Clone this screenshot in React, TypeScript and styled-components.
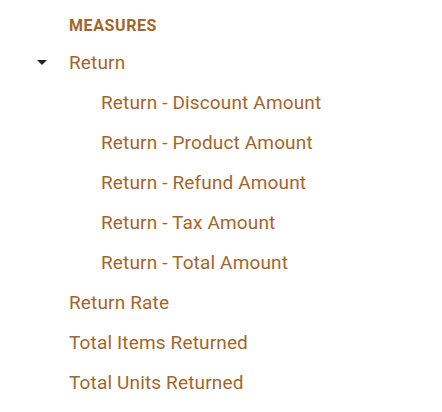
import styled, { createGlobalStyle } from 'styled-components';

const GlobalStyle = createGlobalStyle`
  body {
    margin: 0;
    background: #fff;
    font-family: Roboto, "Liberation Sans", sans-serif;
  }
`;

const Tree = styled.div`
  padding-top: 8px;
  color: #a4652b;
`;

const SectionTitle = styled.div`
  height: 34px;
  display: flex;
  align-items: center;
  padding-left: 69px;
  font-size: 16px;
  font-weight: 700;
  letter-spacing: 0.6px;
`;

const Row = styled.div<{ $depth: number }>`
  height: 40px;
  display: flex;
  align-items: center;
  padding-left: ${(p) => 69 + p.$depth * 32}px;
  font-size: 19px;
  letter-spacing: 0.15px;
  position: relative;
`;

const Caret = styled.span`
  position: absolute;
  left: 37px;
  top: 50%;
  margin-top: -2px;
  width: 0;
  height: 0;
  border-left: 5px solid transparent;
  border-right: 5px solid transparent;
  border-top: 5px solid #222;
`;

const children = [
  'Return - Discount Amount',
  'Return - Product Amount',
  'Return - Refund Amount',
  'Return - Tax Amount',
  'Return - Total Amount',
];

const others = ['Return Rate', 'Total Items Returned', 'Total Units Returned'];

const App: React.FC = () => {
  return (
    <>
      <GlobalStyle />
      <Tree>
        <SectionTitle>MEASURES</SectionTitle>
        <Row $depth={0}>
          <Caret />
          Return
        </Row>
        {children.map((name) => (
          <Row key={name} $depth={1}>
            {name}
          </Row>
        ))}
        {others.map((name) => (
          <Row key={name} $depth={0}>
            {name}
          </Row>
        ))}
      </Tree>
    </>
  );
};

export default App;
